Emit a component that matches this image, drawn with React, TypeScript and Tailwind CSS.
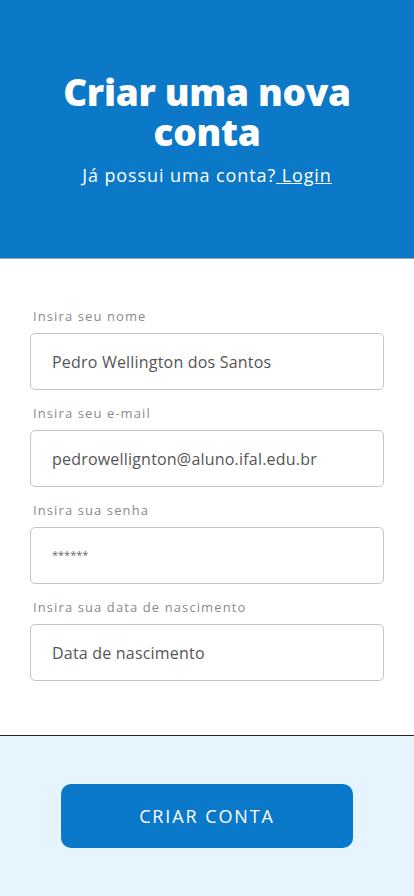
import React from "react"

const fields = [
  { label: "Insira seu nome", value: "Pedro Wellington dos Santos" },
  { label: "Insira seu e-mail", value: "pedrowellignton@aluno.ifal.edu.br" },
  { label: "Insira sua senha", value: "******", small: true },
  { label: "Insira sua data de nascimento", value: "Data de nascimento" },
]

export default function App() {
  return (
    <div className="w-[414px] h-[896px] flex flex-col font-['Open_Sans',sans-serif]">
      {/* Cabeçalho */}
      <header className="h-[259px] shrink-0 bg-[#0b78c8] border-b border-[#9aa4ad] flex flex-col items-center pt-[72px]">
        <h1 className="text-white text-[37px] leading-[40px] font-extrabold text-center tracking-[-0.3px] w-[310px]">
          Criar uma nova conta
        </h1>
        <p className="text-white text-[18px] tracking-[0.9px] mt-[10px]">
          Já possui uma conta?<a href="#" className="underline"> Login</a>
        </p>
      </header>

      {/* Formulário */}
      <main className="flex-1 bg-white px-[30px] pt-[49px] border-b border-[#222]">
        {fields.map((f) => (
          <div key={f.label} className="mb-[15px]">
            <label className="block text-[13px] leading-[16px] text-[#8a8a8a] tracking-[1.1px] pl-[3px] mb-[9px]">
              {f.label}
            </label>
            <div className="h-[57px] border border-[#c4c4c4] rounded-[5px] flex items-center px-[21px]">
              <span className={f.small ? "text-[11px] text-[#666]" : "text-[16px] text-[#555] tracking-[0.2px]"}>
                {f.value}
              </span>
            </div>
          </div>
        ))}
      </main>

      {/* Rodapé */}
      <footer className="h-[160px] shrink-0 bg-[#e6f4fd] flex justify-center pt-[48px]">
        <button className="w-[292px] h-[64px] rounded-[10px] bg-[#0b79c9] text-white text-[18px] tracking-[1.9px]">
          CRIAR CONTA
        </button>
      </footer>
    </div>
  )
}
